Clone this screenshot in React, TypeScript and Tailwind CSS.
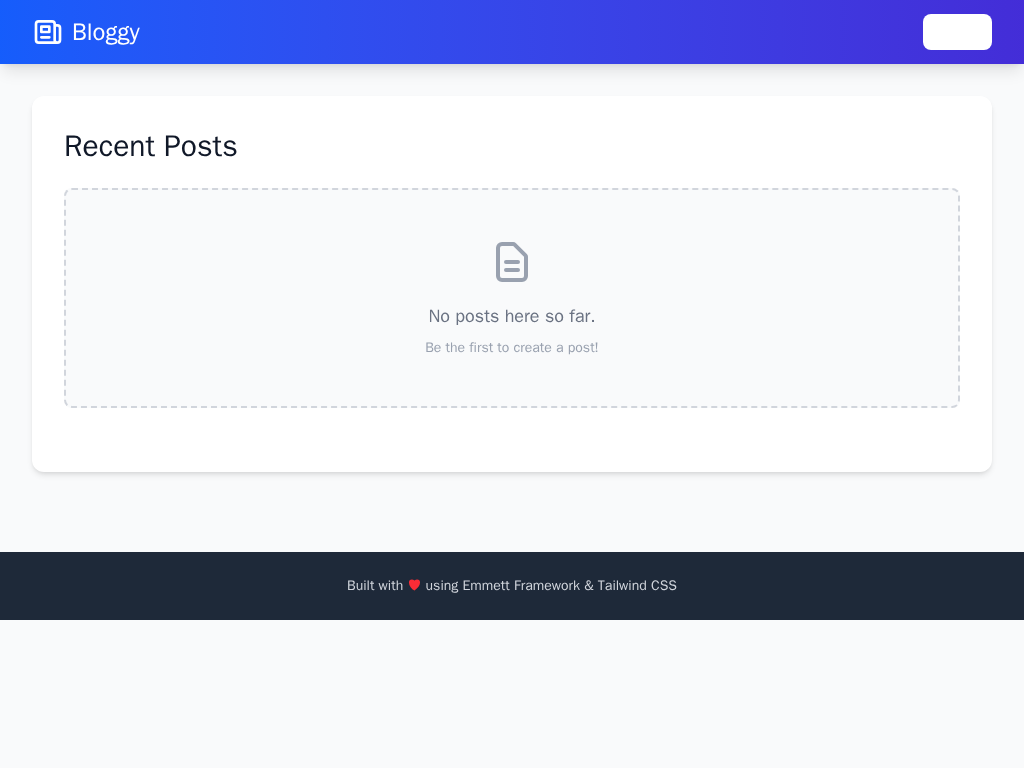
import React from "react";

function NewspaperIcon() {
  return (
    <svg className="size-8" fill="none" stroke="currentColor" strokeWidth={2} strokeLinecap="round" strokeLinejoin="round" viewBox="0 0 24 24" aria-hidden="true">
      <path d="M19 20H5a2 2 0 01-2-2V6a2 2 0 012-2h10a2 2 0 012 2v1m2 13a2 2 0 01-2-2V7m2 13a2 2 0 002-2V9a2 2 0 00-2-2h-2m-4-3H9M7 16h6M7 8h6v4H7V8z" />
    </svg>
  );
}

function DocumentIcon() {
  return (
    <svg className="mx-auto mb-4 size-12 text-gray-400" fill="none" stroke="currentColor" strokeWidth={2} strokeLinecap="round" strokeLinejoin="round" viewBox="0 0 24 24" aria-hidden="true">
      <path d="M9 12h6m-6 4h6m2 5H7a2 2 0 01-2-2V5a2 2 0 012-2h5.586a1 1 0 01.707.293l5.414 5.414a1 1 0 01.293.707V19a2 2 0 01-2 2z" />
    </svg>
  );
}

export default function App() {
  return (
    <div className="min-h-screen bg-gray-50 font-['WenQuanYi_Zen_Hei','Liberation_Sans',sans-serif]">
      <nav className="bg-gradient-to-r from-blue-600 to-indigo-700 shadow-lg">
        <div className="mx-auto flex h-16 max-w-7xl items-center justify-between px-8">
          <a href="#" className="flex items-center gap-2 text-2xl text-white">
            <NewspaperIcon />
            <span>Bloggy</span>
          </a>
          <a href="#login" aria-label="Log in" className="h-9 w-[69px] rounded-lg bg-white" />
        </div>
      </nav>
      <main className="mx-auto max-w-7xl px-8 py-8">
        <div className="rounded-xl bg-white p-8 shadow-md">
          <h1 className="mb-6 text-3xl text-gray-900">Recent Posts</h1>
          <div className="mb-8 rounded-lg border-2 border-dashed border-gray-300 bg-gray-50 p-12 text-center">
            <DocumentIcon />
            <p className="text-lg text-gray-500">No posts here so far.</p>
            <p className="mt-2 text-sm text-gray-400">Be the first to create a post!</p>
          </div>
        </div>
      </main>
      <footer className="mt-12 bg-gray-800 py-6 text-center text-sm text-gray-300">
        <p>
          Built with <span className="text-red-500">♥</span> using Emmett Framework &amp; Tailwind CSS
        </p>
      </footer>
    </div>
  );
}
